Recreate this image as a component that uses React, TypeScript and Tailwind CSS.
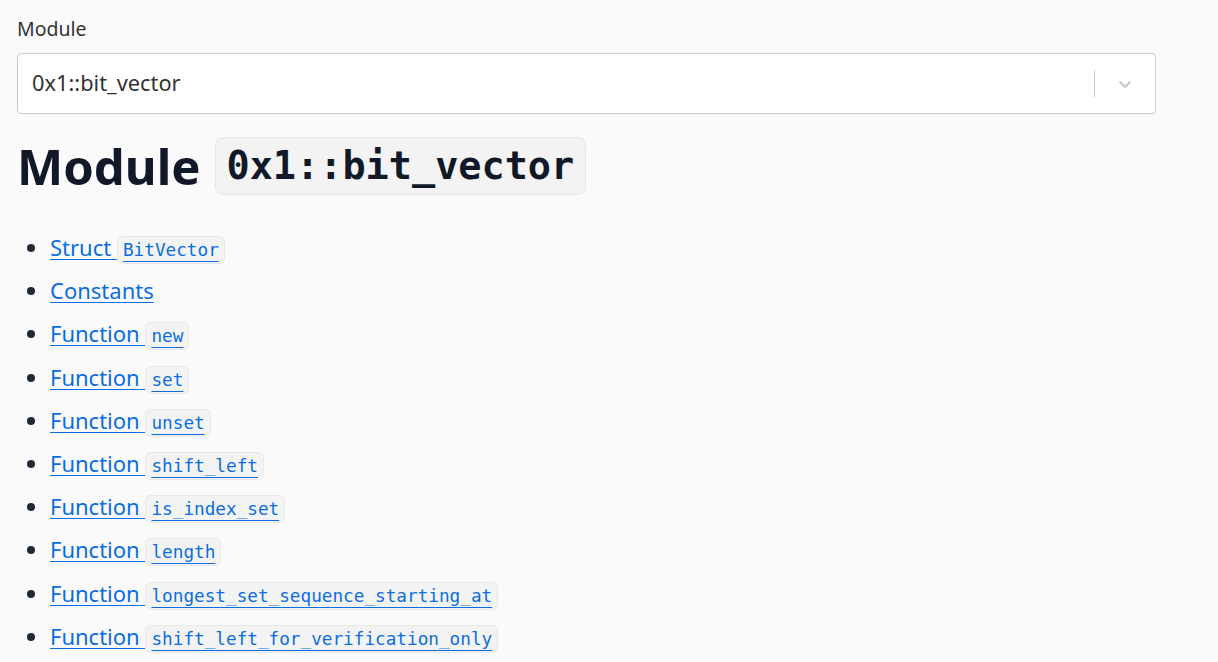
import React from "react";

const items: [string, string | null][] = [
  ["Struct", "BitVector"],
  ["Constants", null],
  ["Function", "new"],
  ["Function", "set"],
  ["Function", "unset"],
  ["Function", "shift_left"],
  ["Function", "is_index_set"],
  ["Function", "length"],
  ["Function", "longest_set_sequence_starting_at"],
  ["Function", "shift_left_for_verification_only"],
];

export default function App() {
  return (
    <div
      className="min-h-[662px] w-full bg-[#fafafa] pl-[17px] pr-[62px] pt-[16px]"
      style={{ fontFamily: '"Noto Sans", "Open Sans", sans-serif' }}
    >
      <div className="text-[19.5px] leading-[26px] text-[#333]">Module</div>
      <div className="mt-[11px] flex h-[61px] items-center rounded-[4px] border border-[#cccccc] bg-white">
        <div className="flex-1 pl-[14px] text-[21.8px] text-[#333]">0x1::bit_vector</div>
        <div className="h-[27px] w-px bg-[#cccccc]" />
        <div className="flex w-[60px] items-center justify-center">
          <svg width="20" height="20" viewBox="0 0 20 20" fill="#cccccc">
            <path d="M4.516 7.548c0.436-0.446 1.043-0.481 1.576 0l3.908 3.747 3.908-3.747c0.533-0.481 1.141-0.446 1.574 0 0.436 0.445 0.408 1.197 0 1.615-0.406 0.418-4.695 4.502-4.695 4.502-0.217 0.223-0.502 0.335-0.787 0.335s-0.57-0.112-0.789-0.335c0 0-4.287-4.084-4.695-4.502s-0.436-1.170 0-1.615z" />
          </svg>
        </div>
      </div>
      <h1 className="mt-[22px] flex items-center text-[49px] font-bold leading-[60px] text-[#111827]">
        <span>Module</span>
        <code
          className="ml-[14px] rounded-[8px] border border-[#e6e6e6] bg-[#f3f3f3] px-[11px] py-[2px] text-[38.5px] font-bold leading-[52px]"
          style={{ fontFamily: '"DejaVu Sans Mono", monospace' }}
        >
          0x1::bit_vector
        </code>
      </h1>
      <ul className="mt-[36px] list-disc pl-[33px] text-[#1f2937]">
        {items.map(([label, code], i) => (
          <li key={i} className="h-[43.2px] text-[22px] leading-[30px]">
            <a href="#" className="text-[#0a6ee0] no-underline">
              <span className="underline decoration-1 underline-offset-[3px]">
                {label}
                {code ? " " : ""}
              </span>
              {code && (
                <code
                  className="rounded-[6px] border border-[#e8e8e8] bg-[#f3f3f3] px-[5px] py-[3px] text-[17.7px] underline decoration-1 underline-offset-[5px]"
                  style={{ fontFamily: '"DejaVu Sans Mono", monospace' }}
                >
                  {code}
                </code>
              )}
            </a>
          </li>
        ))}
      </ul>
    </div>
  );
}
